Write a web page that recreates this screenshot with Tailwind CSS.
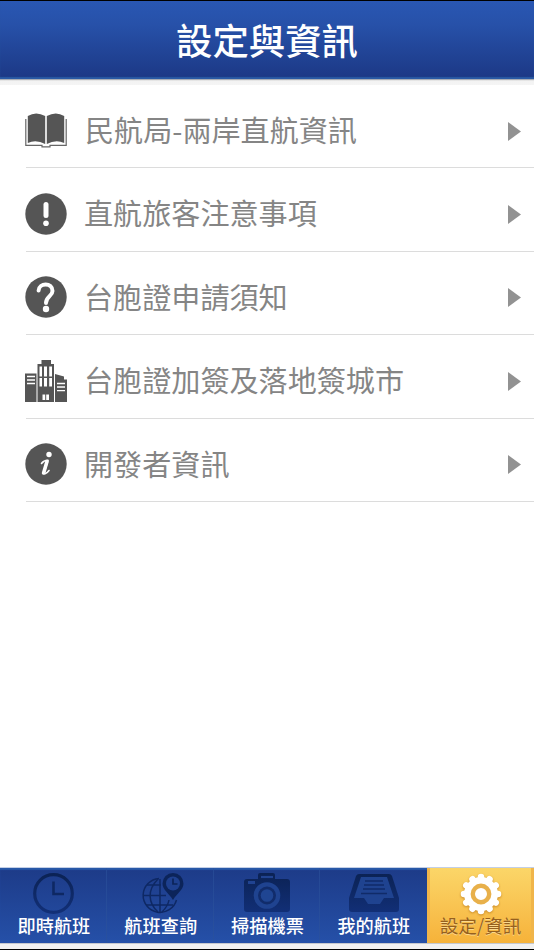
<!DOCTYPE html>
<html lang="zh-Hant">
<head>
<meta charset="utf-8">
<title>設定與資訊</title>
<script src="https://cdn.jsdelivr.net/npm/@tailwindcss/browser@4"></script>
</head>
<body class="bg-white">
<div class="flex flex-col w-[534px] h-[950px] overflow-hidden bg-white font-['Noto_Sans_CJK_TC',sans-serif]">
  <header class="h-[79px] shrink-0 border-t border-black bg-linear-to-b from-[#2957b3] via-[#2751a9] via-30% to-[#1c3885] flex items-center justify-center shadow-[inset_0_-2px_1px_#2a5aa5]">
    <h1 class="text-[36.4px] leading-none font-medium text-white pb-px">設定與資訊</h1>
  </header>
  <div class="h-[6px] shrink-0 border-t border-[#a9adb5] bg-linear-to-b from-[#dedede] via-[#f3f3f3] via-30% to-[#f5f5f5]"></div>

  <ul class="grow text-[29.1px] leading-none text-[#858585] font-normal">
    <li class="ml-[26px] h-[83px] pr-[13px] flex items-center border-b border-[#dcdcdc]">
      <svg class="-ml-px mt-[8px] w-[42px] h-[35px] shrink-0" viewBox="0 0 42 35" fill="#555">
        <path d="M2.8 3Q11-2 20.2 3V31Q11 26 2.8 30ZM21.8 3Q31-2 39.2 3V30Q31 26 21.8 31Z"/>
        <path d="M.8 6V32.3H17V33.8H25V32.3H41.2V6" fill="none" stroke="#666" stroke-width="1.2"/>
      </svg>
      <span class="ml-[18px] mt-[7px] grow">民航局-兩岸直航資訊</span>
      <svg class="mt-[10px] w-[13px] h-[19px]" viewBox="0 0 13 19" fill="#929292"><path d="M0 0L13 9.5L0 19Z"/></svg>
    </li>
    <li class="ml-[26px] h-[83.5px] pr-[13px] flex items-center border-b border-[#dcdcdc]">
      <svg class="-ml-px mt-[9px] w-[42px] h-[42px] shrink-0" viewBox="0 0 42 42"><circle cx="21" cy="21" r="20.7" fill="#555"/><path d="M21 11.5V22.5" stroke="#fff" stroke-width="5" stroke-linecap="round"/><circle cx="21" cy="30.3" r="2.8" fill="#fff"/></svg>
      <span class="ml-[17px] mt-[7px] grow">直航旅客注意事項</span>
      <svg class="mt-[10px] w-[13px] h-[19px]" viewBox="0 0 13 19" fill="#929292"><path d="M0 0L13 9.5L0 19Z"/></svg>
    </li>
    <li class="ml-[26px] h-[83.5px] pr-[13px] flex items-center border-b border-[#dcdcdc]">
      <svg class="-ml-px mt-[9px] w-[42px] h-[42px] shrink-0" viewBox="0 0 42 42"><circle cx="21" cy="21" r="20.7" fill="#555"/><path d="M13.6 14.5C14 6.5 27.5 6.3 27.5 15C27.5 20 21 20.5 21 27" fill="none" stroke="#fff" stroke-width="4" stroke-linecap="round"/><circle cx="21" cy="33" r="3.2" fill="#fff"/></svg>
      <span class="ml-[17px] mt-[7px] grow">台胞證申請須知</span>
      <svg class="mt-[10px] w-[13px] h-[19px]" viewBox="0 0 13 19" fill="#929292"><path d="M0 0L13 9.5L0 19Z"/></svg>
    </li>
    <li class="ml-[26px] h-[83.5px] pr-[13px] flex items-center border-b border-[#dcdcdc]">
      <svg class="-ml-px mt-[9px] w-[42px] h-[42px] shrink-0" viewBox="0 0 42 42" fill="#555">
        <path d="M0 13.5H11.5V42H0ZM12.5 4H16.5V0H26V4H29V42H12.5ZM30 14L39 16.5V19.5H42V42H30Z"/>
        <path d="M2 16.5H10M2 20H10M2 23.5H10M32 23.5H40M32 27H40M32 30.7H40" stroke="#fff" stroke-width="1.3"/>
        <path d="M14.5 6.5H17V16.5H14.5ZM19 6.5H22V16.5H19ZM24.2 6.5H27V16.5H24.2ZM14.5 18H17V26.5H14.5ZM19 18H22V26.5H19ZM24.2 18H27V26.5H24.2ZM17.5 34.5H20.2V40H17.5ZM21.2 34.5H24V40H21.2Z" fill="#fff"/>
      </svg>
      <span class="ml-[17px] mt-[7px] grow">台胞證加簽及落地簽城市</span>
      <svg class="mt-[10px] w-[13px] h-[19px]" viewBox="0 0 13 19" fill="#929292"><path d="M0 0L13 9.5L0 19Z"/></svg>
    </li>
    <li class="ml-[26px] h-[83.5px] pr-[13px] flex items-center border-b border-[#dcdcdc]">
      <svg class="-ml-px mt-[9px] w-[42px] h-[42px] shrink-0" viewBox="0 0 42 42"><circle cx="21" cy="21" r="20.7" fill="#555"/><circle cx="24" cy="11.5" r="2.7" fill="#fff"/><path d="M16.5 20.5Q18.5 17.5 23 17.3L19.2 29.2Q18.8 31.2 20.5 30.5Q22.3 29.8 24 27.5" fill="none" stroke="#fff" stroke-width="1.6" stroke-linecap="round" stroke-linejoin="round"/><path d="M22 18.5L18.6 30" stroke="#fff" stroke-width="3.6" stroke-linecap="round"/></svg>
      <span class="ml-[17px] mt-[7px] grow">開發者資訊</span>
      <svg class="mt-[10px] w-[13px] h-[19px]" viewBox="0 0 13 19" fill="#929292"><path d="M0 0L13 9.5L0 19Z"/></svg>
    </li>
  </ul>

  <nav class="h-[76px] shrink-0 grid grid-cols-5 border-t border-[#c3cfe6] bg-linear-to-b from-[#1d3b88] to-[#2550a8] text-[18.2px] leading-none font-medium text-white shadow-[inset_0_2px_1px_#2858a8]">
    <a class="flex flex-col items-center border-r border-[#2b529b]/60 pt-[5px] pl-[2px]">
      <svg class="w-[42px] h-[42px]" viewBox="0 0 42 42" fill="none"><defs><linearGradient id="ink" gradientUnits="userSpaceOnUse" x1="0" y1="0" x2="0" y2="42"><stop stop-color="#0b2254"/><stop offset="1" stop-color="#123079"/></linearGradient></defs><circle cx="20.5" cy="20.5" r="18.8" stroke="url(#ink)" stroke-width="3.2"/><path d="M20.5 8.5V21H31" stroke="#0e2863" stroke-width="2.6"/></svg>
      <span class="mt-px">即時航班</span>
    </a>
    <a class="flex flex-col items-center border-r border-[#2b529b]/60 pt-[5px] pl-[2px]">
      <svg class="ml-[5px] w-[42px] h-[42px]" viewBox="0 0 42 42" fill="none">
        <g stroke="#0e2864" stroke-width="1.5"><path d="M17 5.4A17 17 0 1 0 34.5 27"/><path d="M18 6V39M1 22.5H24M5 12H19M4 32H31M16 6C5 17 6 30 16 39M20 39Q26 33 27 27"/></g>
        <path d="M31 0A10.5 10.5 0 0 1 41.5 10.5C41.5 17 35 20 31 27C27 20 20.5 17 20.5 10.5A10.5 10.5 0 0 1 31 0Z" fill="#0c245a"/><circle cx="31" cy="10.5" r="7" fill="#1e408f"/><path d="M31 5.5V11H35.5" stroke="#0c245a" stroke-width="1.7"/>
      </svg>
      <span class="mt-px">航班查詢</span>
    </a>
    <a class="flex flex-col items-center border-r border-[#2b529b]/60 pt-[5px] pl-[2px]">
      <svg class="w-[48px] h-[42px]" viewBox="0 0 48 42"><path d="M4 6H15V2Q15 0 17 0H30Q32 0 32 2V6H44Q47 6 47 9V36Q47 39 44 39H4Q1 39 1 36V9Q1 6 4 6Z" fill="url(#ink)"/><path d="M18 4H30" stroke="#204391" stroke-width="2.2"/><path d="M5 9.5H12" stroke="#204391" stroke-width="3"/><circle cx="24" cy="22.5" r="13.3" fill="#1f4390"/><circle cx="24" cy="22.5" r="9" fill="#112c6b"/><circle cx="24" cy="22.5" r="6.3" fill="#1f4592"/></svg>
      <span class="mt-px">掃描機票</span>
    </a>
    <a class="flex flex-col items-center pt-[5px]">
      <svg class="w-[52px] h-[42px]" viewBox="0 0 52 42"><path d="M11 1H41Q43 1 44 3L51 25V36Q51 39 48 39H4Q1 39 1 36V25L8 3Q9 1 11 1Z" fill="url(#ink)"/><path d="M13 4H39L46 25H36L32 31H20L16 25H6Z" fill="#1f4390"/><path d="M17 8H35M16 12H36M15 16H37M13 20.5H39" stroke="#102b68" stroke-width="1.6"/></svg>
      <span class="mt-px">我的航班</span>
    </a>
    <a class="flex flex-col items-center pt-[5px] border-x-[3px] border-[#f0b54a] bg-linear-to-b from-[#fbd668] to-[#f6b239] text-[#96601e] font-normal">
      <svg class="w-[42px] h-[42px] drop-shadow-[0_1px_1px_#c98a28]" viewBox="-21 -21 42 42"><g stroke="#fff" stroke-width="6.6" stroke-linecap="round"><path d="M0-17V17M-17 0H17M-14.7-8.5L14.7 8.5M-14.7 8.5L14.7-8.5M-8.5-14.7L8.5 14.7M8.5-14.7L-8.5 14.7"/></g><circle r="17" fill="#fff"/><circle r="8.2" fill="none" stroke="#e8b04a" stroke-width="4.4"/></svg>
      <span class="mt-px text-[18.6px] whitespace-nowrap [text-shadow:0_1px_0_#fbd98c]">設定/資訊</span>
    </a>
  </nav>
  <div class="h-[6px] shrink-0 border-t border-[#c5c8ce] bg-[#f1f1f1]"></div>
  <div class="h-px shrink-0 bg-black"></div>
</div>
</body>
</html>
